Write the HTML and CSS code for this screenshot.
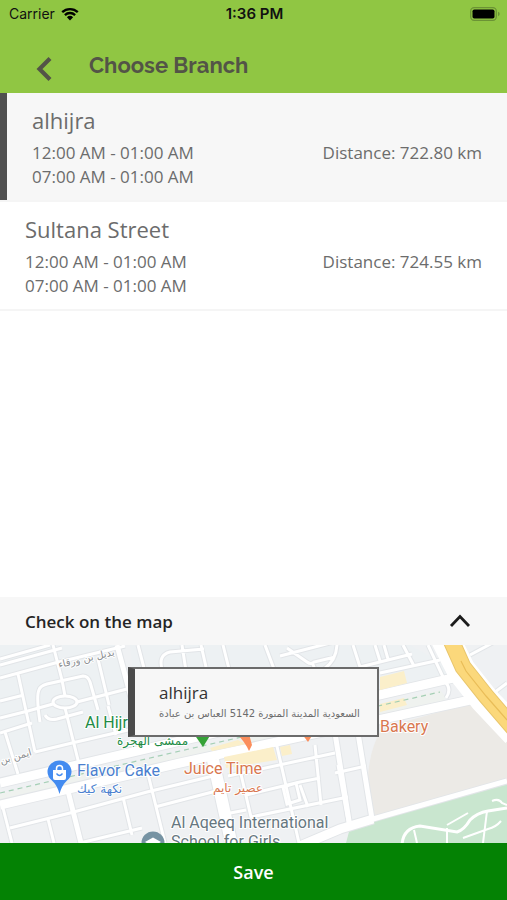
FILE: index.html
```html
<!DOCTYPE html>
<html lang="en">
<head>
<meta charset="utf-8">
<meta name="viewport" content="width=device-width, initial-scale=1">
<title>Choose Branch</title>
<link rel="stylesheet" href="styles.css">
</head>
<body>
<header class="top">
  <div class="status">
    <div class="carrier">Carrier
      <svg class="wifi" viewBox="0 0 18 14" aria-hidden="true"><path d="M1.2 5.2a11.2 11.2 0 0 1 15.6 0M3.9 8.1a7.3 7.3 0 0 1 10.2 0" fill="none" stroke="#000" stroke-width="2.3"/><path d="M5.9 10.2a4.6 4.6 0 0 1 6.2 0L9 13.4z"/></svg>
    </div>
    <time class="clock">1:36 PM</time>
    <svg class="battery" viewBox="0 0 30 14" aria-hidden="true"><rect x=".7" y=".7" width="25.6" height="12.6" rx="3.5" fill="none" stroke="#6b9335" stroke-width="1.3"/><rect x="2.5" y="2.5" width="22" height="9" rx="1.8"/><path d="M28 4.8q1.7.6 1.7 2.2T28 9.2z" fill="#6b9335"/></svg>
  </div>
  <div class="titlebar">
    <button class="back" type="button" aria-label="Back"><svg viewBox="0 0 16 24" aria-hidden="true"><path d="M14 1.500 3.500 12l10.500 10.500" fill="none" stroke="#535447" stroke-width="4.200"/></svg></button>
    <h1>Choose Branch</h1>
  </div>
</header>
<main class="content">
  <ul class="branches">
    <li class="selected"><button class="branch" type="button">
      <span class="name">alhijra</span>
      <span class="hours">12:00 AM - 01:00 AM<br>07:00 AM - 01:00 AM</span>
      <span class="distance">Distance: 722.80 km</span>
    </button></li>
    <li><button class="branch" type="button">
      <span class="name">Sultana Street</span>
      <span class="hours">12:00 AM - 01:00 AM<br>07:00 AM - 01:00 AM</span>
      <span class="distance">Distance: 724.55 km</span>
    </button></li>
  </ul>
</main>
<button class="map-toggle" type="button" aria-expanded="true">
  <span>Check on the map</span>
  <svg viewBox="0 0 22 14" aria-hidden="true"><path d="M2 12 11 2.500 20 12" fill="none" stroke="#1c1c1c" stroke-width="2.800"/></svg>
</button>
<section class="map">
  <svg class="tiles" viewBox="0 645 507 198" preserveAspectRatio="xMidYMid slice" aria-hidden="true">
    <defs>
      <g id="streets">
        <path d="M0 659 50 645M0 665 62 648M0 678 55 663 125 646M53 645l9 35M18 674l17 78M98 659l11 46M138 645l7 27M40 722q-4-26-1-32 1-4 8-6l36-8q5 0 7 6l8 28M62 680l3 16M53 704l-25 7-28 7M77 702l50-13M65 708l14 56M45 715q3 6 12 4l26-7M0 701l24-6M0 733l32-10M35 752l37-9 56-13M5 732l13 42M108 706l8 29"/>
        <ellipse cx="65" cy="702" rx="12" ry="6"/>
        <path d="M3 808l9 35M10 828l60-15 77-21 66-16M48 819l6 24M123 797l9 38M147 770l18 73M155 807l65-17M80 843l62-15"/>
        <path d="M162 669q-4-14 8-17l34-3M182 645l4 26M201 645l5 22M223 645l6 24M265 645l9 24M280 656l54-14M287 648l20 14q4 3 7 0l21-5M312 662l4 10M337 645q-1 16-13 24M353 645l7 22 52-13M375 645l5 16M384 645l4 14M403 645l11 21M380 673l60-13"/>
        <path d="M276 742l23 101M315 745l6 60M228 776l107-23M240 770l11 47 97-20M220 815l26-5M246 795l54-13 20-4M283 787l13-4 4 17-13 4zM300 785l8 22M335 773l31-7M338 765l11 62"/>
        <path d="M428 645l15 32M437 645l12 28M470 655l28-15M500 699l-5-7 12-9M443 680q10 8 3 18"/>
      </g>
      <g id="avenues">
        <path d="M0 783 180 741 466 675M0 805 180 763 484 697"/>
        <path d="M300 846 340 829 373 819"/>
      </g>
      <g id="links">
        <path d="M117 645l15 56M68 791l13 52M335 733l15 94M358 733l14 86M340 829 373 819 507 781"/>
      </g>
    </defs>
    <rect y="645" width="507" height="198" fill="#eff1f3"/>
    <path d="M0 645h120l20 80-140 35zM130 645h280l50 28-320 75z" fill="#edf1f3"/>
    <path d="M368 778q1-28 14-50l93-26 32 35v43l-133 38z" fill="#eceae6"/>
    <path d="M350 828l157-44v59H346z" fill="#c9e6cf"/>
    <path d="M0 794 180 752 440 690q8 8 3 13L180 763 0 805z" fill="#eff2ef"/>
    <use href="#streets" class="road edge"/>
    <use href="#links" class="link edge"/>
    <use href="#avenues" class="avenue edge"/>
    <path d="M213 760l19 86" class="wide edge"/>
    <use href="#streets" class="road"/>
    <use href="#links" class="link"/>
    <use href="#avenues" class="avenue"/>
    <path d="M213 760l19 86" class="wide"/>
    <g fill="#fbefca"><path d="M380 677l24-6 3 12-27 7zM380 704l24-6 3 7-27 7zM210 748l28-8 8 4-34 7zM224 757l49-10 4 13-51 8zM280 747l10-2 2 9-10 2z"/></g>
    <path d="M0 793 180 751 440 692" fill="none" stroke="#a5cfb5" stroke-width="1.200" stroke-dasharray="5 4"/>
    <g fill="none" stroke="#fff" stroke-width="3"><path d="M402 845q1-17 18-19l37 6q7-2 13-12 7-7 18-9l19-3"/><path d="M487 811l-4 32M447 828v15M447 825l21-12M463 838l25-9q8-2 13-8M492 801q7-3 10 2l5 2M414 830l3 13" stroke-width="2"/></g>
    <path d="M445 638 461 670 484 699 516 733" fill="none" stroke="#fff" stroke-width="29"/>
    <path d="M450 638 463 667 486 696 516 731" fill="none" stroke="#e9c66d" stroke-width="17"/>
    <path d="M450 638 463 667 486 696 516 731" fill="none" stroke="#fbd87b" stroke-width="15"/>
    <path d="M461 661l5 10 20 25 21 24" fill="none" stroke="#e9bd58" stroke-width="1.200"/>
    <path d="M194 734h17l-8 13z" fill="#35a237"/>
    <path d="M237 734h12l3 11-3 6q-4-9-12-17z" fill="#fb8e5c"/>
    <path d="M302 734h11l-5 8z" fill="#fb8e5c"/>
    <path d="M59.500 794q-2-8-7-13-5-4-5-9a12 11.500 0 0 1 24 0q0 5-5 9-5 5-7 13z" fill="#438bf0"/>
    <path d="M53 770h13v8q0 2-2 2h-9q-2 0-2-2z" fill="#fff"/>
    <path d="M56.500 770v-1.500a3 3 0 0 1 6 0v1.500" fill="none" stroke="#fff" stroke-width="1.500"/>
    <path d="M56.500 773.500q3 4 6 0" fill="none" stroke="#438bf0" stroke-width="1.300"/>
    <circle cx="153" cy="843" r="11.500" fill="#7693a3"/><path d="M145 842l8-4.500 8 4.500-8 4.500z" fill="#fff"/>
    <g class="labels">
      <text x="85" y="728" fill="#218b45">Al Hijra</text>
      <text class="ar" x="117" y="745" fill="#218b45">ممشى الهجرة</text>
      <text x="77" y="776" fill="#4b7fcf">Flavor Cake</text>
      <text class="ar" x="77" y="793" fill="#4b7fcf">نكهة كيك</text>
      <text x="184" y="774" fill="#d9774f">Juice Time</text>
      <text class="ar" x="213" y="792" fill="#d9774f">عصير تايم</text>
      <text x="380" y="732" fill="#d9774f">Bakery</text>
      <text x="171" y="828" fill="#667780">Al Aqeeq International</text>
      <text x="171" y="847" fill="#667780">School for Girls</text>
      <text class="street" transform="translate(59 668) rotate(-13)">بديل بن ورقاء</text>
      <text class="street" transform="translate(1 764) rotate(-16)">ايمن بن</text>
    </g>
  </svg>
  <div class="place">
    <strong>alhijra</strong>
    <span lang="ar" dir="rtl">السعودية المدينة المنورة 5142 العباس بن عبادة</span>
  </div>
</section>
<button class="save" type="button">Save</button>
</body>
</html>
```
FILE: styles.css
```css
* { box-sizing: border-box; }
body {
  margin: 0;
  min-height: 100vh;
  display: flex;
  flex-direction: column;
  background: #fff;
  color: #6c6c6c;
  font-family: "Open Sans", "Noto Sans", sans-serif;
}
button {
  margin: 0;
  border: 0;
  padding: 0;
  background: none;
  color: inherit;
  font: inherit;
  text-align: left;
}
svg { display: block; }
.top { background: #90c643; height: 93px; }
.status {
  display: grid;
  grid-template-columns: 1fr auto 1fr;
  align-items: center;
  height: 28px;
  padding: 0 7px 0 9px;
  color: #111;
  font: 14px/28px Inter, sans-serif;
}
.carrier { display: flex; align-items: center; gap: 6px; }
.wifi { width: 18px; height: 14px; }
.clock { font-size: 15px; font-weight: 600; }
.battery { width: 30px; height: 14px; justify-self: end; }
.titlebar {
  display: flex;
  align-items: center;
  gap: 37px;
  height: 74px;
  padding-left: 36px;
}
.back svg { width: 16px; height: 24px; margin-top: 8px; }
h1 { margin: 0; color: #535447; font: 700 22px/30px Raleway, Lato, sans-serif; }

.content { flex: 1; }
.branches { list-style: none; margin: 0; padding: 0; }
.branches li { border-bottom: 2px solid #f5f5f5; }
.branch {
  display: grid;
  grid-template-columns: 1fr auto;
  width: 100%;
  padding: 11px 25px;
  font-size: 17px;
  line-height: 24px;
}
.selected .branch { background: #f7f7f7; border-left: 7px solid #505050; }
.name { grid-column: 1 / -1; font-size: 22px; line-height: 33px; padding-bottom: 4px; }

.map-toggle {
  display: flex;
  align-items: center;
  justify-content: space-between;
  height: 48px;
  padding: 0 36px 0 25px;
  background: #f7f7f7;
  color: #252525;
  font-size: 17px;
  font-weight: 600;
}
.map-toggle svg { width: 22px; height: 14px; }

.map { position: relative; height: 198px; padding: 22px; overflow: hidden; }
.tiles { position: absolute; inset: 0; width: 100%; height: 100%; }
.road, .link, .avenue, .wide { fill: none; stroke: #fff; }
.road { stroke-width: 3px; }
.link { stroke-width: 5px; }
.avenue { stroke-width: 9px; }
.wide { stroke-width: 12px; }
.edge { stroke: #e2e5e8; }
.road.edge { stroke-width: 5px; }
.link.edge { stroke-width: 7px; }
.avenue.edge { stroke-width: 11px; }
.wide.edge { stroke-width: 14px; }
.labels {
  font: 16px Roboto, sans-serif;
  paint-order: stroke;
  stroke: #fff;
  stroke-width: 2px;
  stroke-linejoin: round;
}
.labels .ar { font: 12px "DejaVu Sans", sans-serif; }
.labels .street { font: 10px "DejaVu Sans", sans-serif; fill: #8a8d90; }

.place {
  position: relative;
  display: flex;
  flex-direction: column;
  width: fit-content;
  height: 70px;
  margin: 0 auto;
  padding: 12px 17px 12px 24px;
  border: 2px solid #6b6b6b;
  border-left: 7px solid #4b4b4b;
  background: #f7f7f7;
}
.place strong { color: #333; font-size: 17px; font-weight: 400; line-height: 24px; }
.place span { font: 10px/18px "DejaVu Sans", sans-serif; white-space: nowrap; }

.save {
  height: 57px;
  background: #048204;
  color: #fff;
  font-size: 18px;
  font-weight: 600;
  text-align: center;
}
```
